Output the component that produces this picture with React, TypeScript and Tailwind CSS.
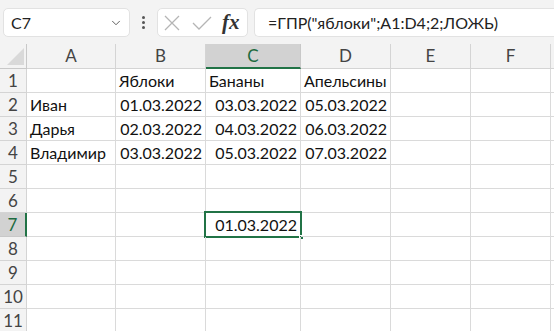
import { ChevronDown } from "lucide-react";

const cols = ["A", "B", "C", "D", "E", "F", ""];

type Cell = { v: string; right?: boolean };

const data: Record<number, Cell[]> = {
  1: [{ v: "" }, { v: "Яблоки" }, { v: "Бананы" }, { v: "Апельсины" }],
  2: [{ v: "Иван" }, { v: "01.03.2022", right: true }, { v: "03.03.2022", right: true }, { v: "05.03.2022", right: true }],
  3: [{ v: "Дарья" }, { v: "02.03.2022", right: true }, { v: "04.03.2022", right: true }, { v: "06.03.2022", right: true }],
  4: [{ v: "Владимир" }, { v: "03.03.2022", right: true }, { v: "05.03.2022", right: true }, { v: "07.03.2022", right: true }],
  7: [{ v: "" }, { v: "" }, { v: "01.03.2022", right: true }],
};

const rows = [1, 2, 3, 4, 5, 6, 7, 8, 9, 10, 11];

const font = { fontFamily: "Lato, 'Noto Sans', sans-serif" };

const FormulaBar = () => (
  <div className="flex items-start h-[44px] bg-[#f3f3f3] pt-[8px] pl-[3px]">
    <div className="flex items-center justify-between w-[127px] h-[29px] bg-white rounded-[5px] border border-[#e2e2e2] pl-[7px] pr-[6px]">
      <span className="text-[16px] text-[#222]">C7</span>
      <ChevronDown size={14} strokeWidth={1.6} className="text-[#555]" />
    </div>
    <div className="flex flex-col items-center justify-center gap-[2px] w-[27px] h-[29px]">
      <span className="w-[3px] h-[3px] bg-[#555] rounded-full" />
      <span className="w-[3px] h-[3px] bg-[#555] rounded-full" />
      <span className="w-[3px] h-[3px] bg-[#555] rounded-full" />
    </div>
    <div className="flex items-center w-[91px] h-[29px] bg-white rounded-[5px] border border-[#e2e2e2] pl-[6px]">
      <svg width="16" height="16" viewBox="0 0 16 16" className="mr-[12px]">
        <path d="M1 1 L15 15 M15 1 L1 15" stroke="#b5b5b5" strokeWidth="1.3" fill="none" />
      </svg>
      <svg width="20" height="16" viewBox="0 0 20 16" className="mr-[10px]">
        <path d="M1 8 L7 14 L19 2" stroke="#b5b5b5" strokeWidth="1.3" fill="none" />
      </svg>
      <span className="italic font-bold text-[21px] text-[#333] leading-none" style={{ fontFamily: "'Liberation Serif', serif" }}>
        fx
      </span>
    </div>
    <div className="flex items-center flex-1 h-[29px] ml-[6px] bg-white rounded-l-[5px] border border-r-0 border-[#e2e2e2] pl-[13px]">
      <span className="text-[16px] text-[#222]">=ГПР("яблоки";A1:D4;2;ЛОЖЬ)</span>
    </div>
  </div>
);

const App = () => {
  return (
    <div className="w-[554px] h-[331px] overflow-hidden bg-white" style={font}>
      <FormulaBar />
      <div className="grid grid-cols-[27px_89px_90px_95px_90px_80px_80px_1fr]">
        <div className="h-[25px] bg-[#f3f3f3] border-r border-b border-[#c8c8c8] relative">
          <svg width="17" height="17" viewBox="0 0 17 17" className="absolute left-[7px] bottom-[3px]">
            <path d="M17 0 L17 17 L0 17 Z" fill="#d9d9d9" />
          </svg>
        </div>
        {cols.map((c) =>
          c === "C" ? (
            <div key={c} className="h-[25px] bg-[#d2d2d2] border-r border-[#c8c8c8] border-b-2 border-b-[#217346] flex items-center justify-center text-[17px] text-[#1d6b40]">
              {c}
            </div>
          ) : (
            <div key={c} className="h-[25px] bg-[#f3f3f3] border-r border-b border-[#d4d4d4] flex items-center justify-center text-[17px] text-[#444]">
              {c}
            </div>
          )
        )}
        {rows.map((r) => (
          <Row key={r} r={r} />
        ))}
      </div>
    </div>
  );
};

const Row = ({ r }: { r: number }) => {
  const cells = data[r] || [];
  const selected = r === 7;
  return (
    <>
      <div
        className={
          selected
            ? "h-[24px] bg-[#d2d2d2] border-r-2 border-r-[#217346] border-b border-b-[#c8c8c8] flex items-center justify-center text-[17px] text-[#1d6b40]"
            : "h-[24px] bg-[#f3f3f3] border-r border-b border-[#d4d4d4] flex items-center justify-center text-[17px] text-[#444]"
        }
      >
        {r}
      </div>
      {cols.map((c, i) => {
        const cell = cells[i];
        const isSel = selected && c === "C";
        return (
          <div
            key={c + i}
            className={
              "h-[24px] border-r border-b border-[#dadada] flex items-center px-[3px] text-[16px] text-[#111] whitespace-nowrap relative " +
              (cell?.right ? "justify-end" : "justify-start")
            }
          >
            {cell?.v}
            {isSel && (
              <div className="absolute -left-[2px] -top-[2px] w-[98px] h-[27px] border-2 border-[#217346]">
                <div className="absolute -right-[4px] -bottom-[4px] w-[5px] h-[5px] bg-[#217346] border border-white" />
              </div>
            )}
          </div>
        );
      })}
    </>
  );
};

export default App;
